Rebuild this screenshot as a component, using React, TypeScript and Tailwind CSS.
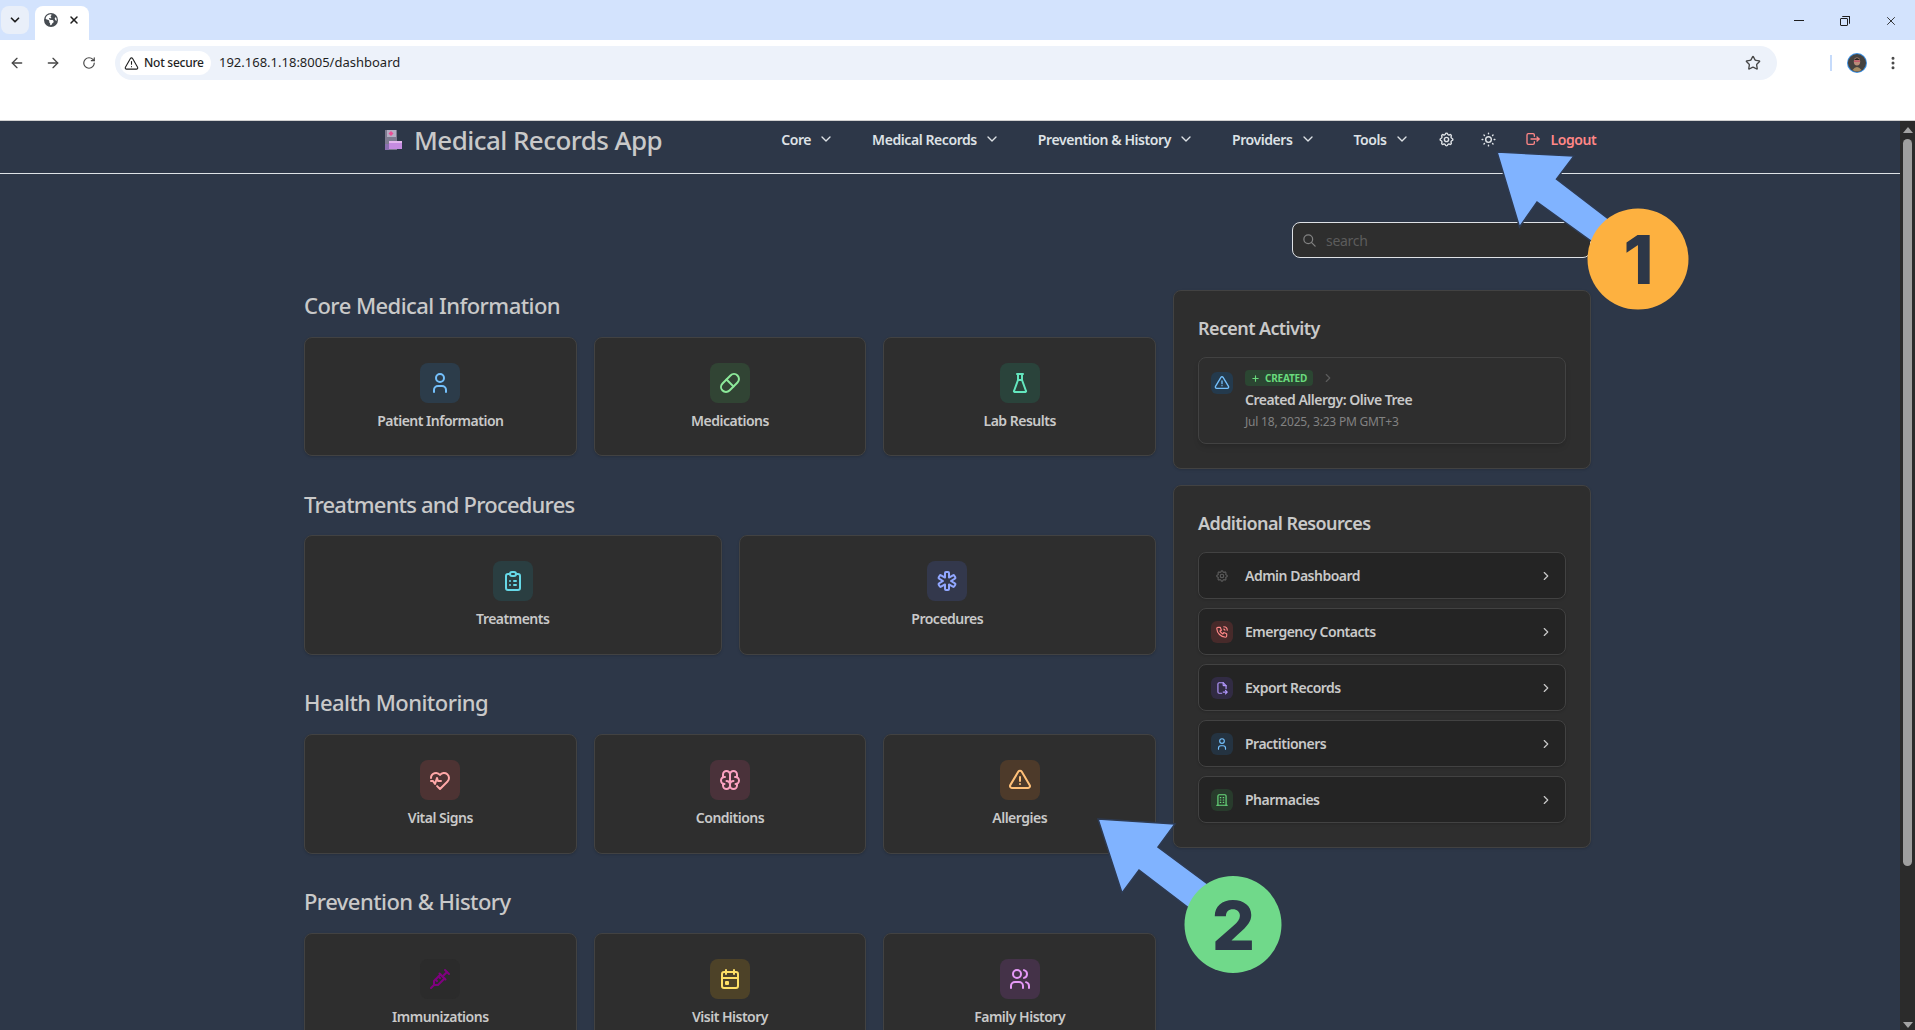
import type { ReactNode } from 'react';
import {
  TbAlertTriangle,
  TbBrain,
  TbBuilding,
  TbCalendarEvent,
  TbChevronDown,
  TbChevronRight,
  TbClipboardList,
  TbFileExport,
  TbFlask,
  TbHeartbeat,
  TbLogout,
  TbMedicalCross,
  TbPhoneCall,
  TbPill,
  TbPlus,
  TbSearch,
  TbSettings,
  TbSun,
  TbUser,
  TbUsers,
  TbVaccine,
} from 'react-icons/tb';
import { FaEarthAmericas } from 'react-icons/fa6';
import { LuArrowLeft, LuArrowRight, LuChevronDown, LuEllipsisVertical, LuRotateCw, LuStar, LuTriangleAlert, LuX } from 'react-icons/lu';

const NavItem = ({ label }: { label: string }) => (
  <div className="flex items-center gap-[7px] text-[14px] font-semibold tracking-[-0.42px] text-[#dee2e6]">
    <span>{label}</span>
    <TbChevronDown size={16} />
  </div>
);

const Tile = ({ icon, label, box }: { icon: ReactNode; label: string; box: string }) => (
  <div className="flex h-[119.67px] flex-col items-center rounded-lg border border-[#424242] bg-[#2e2e2e] pt-[25px] shadow-sm">
    <div className={`flex h-10 w-10 items-center justify-center rounded-lg ${box}`}>{icon}</div>
    <p className="mt-[8px] text-[14px] leading-[20px] font-semibold tracking-[-0.5px] text-[#c9c9c9]">{label}</p>
  </div>
);

const Heading = ({ children }: { children: ReactNode }) => (
  <h2 className="mb-[16.67px] h-[30px] text-[22px] leading-[30px] font-medium tracking-[-0.55px] text-[#c9c9c9]">{children}</h2>
);

const Resource = ({ icon, label, box }: { icon: ReactNode; label: string; box: string }) => (
  <div className="flex h-[47px] items-center rounded-lg border border-[#424242] bg-[#242424] pr-[12px] pl-[12px] shadow-sm">
    <div className={`flex h-[22px] w-[22px] items-center justify-center rounded-md ${box}`}>{icon}</div>
    <span className="ml-[12px] flex-1 text-[14px] font-semibold tracking-[-0.5px] text-[#c9c9c9]">{label}</span>
    <TbChevronRight size={14} className="text-[#c9c9c9]" />
  </div>
);

// browser window around the page
const BrowserChrome = () => (
  <div className="h-[121px] shrink-0 border-b border-[#d0d0d0] bg-white">
    <div className="flex h-10 items-start bg-[#d3e3fd] pt-[6px] pl-[1px]">
      <div className="flex h-7 w-7 items-center justify-center rounded-lg bg-[#e9eff9]">
        <LuChevronDown size={14} strokeWidth={3} className="text-[#1f1f1f]" />
      </div>
      <div className="ml-[6px] flex h-[34px] w-[54px] items-center rounded-t-lg bg-white pb-[6px] pl-[9px]">
        <FaEarthAmericas size={14} className="text-[#474c52]" />
        <LuX size={12} strokeWidth={3} className="ml-[10px] text-[#1f1f1f]" />
      </div>
      <div className="ml-auto flex h-[29px] items-center pr-[17px] text-[#1f1f1f]">
        <div className="h-[1px] w-[10px] bg-[#1f1f1f]" />
        <div className="relative ml-[36px] h-[10px] w-[10px]">
          <div className="absolute top-[2px] left-0 h-[8px] w-[8px] rounded-[1px] border border-[#1f1f1f]" />
          <div className="absolute top-0 left-[2px] h-[8px] w-[8px] rounded-[1px] border-t border-r border-[#1f1f1f]" />
        </div>
        <LuX size={14} strokeWidth={1.5} className="ml-[34px]" />
      </div>
    </div>
    <div className="flex h-[46px] items-center pl-[9px]">
      <LuArrowLeft size={16} strokeWidth={2} className="text-[#474747]" />
      <LuArrowRight size={16} strokeWidth={2} className="ml-[20px] text-[#474747]" />
      <LuRotateCw size={14} strokeWidth={2} className="ml-[21px] text-[#474747]" />
      <div className="ml-[19px] flex h-[34px] w-[1662px] items-center rounded-full bg-[#edf2fa] pr-[16px] pl-[5px]">
        <div className="flex h-6 w-[91px] items-center rounded-full bg-white pl-[4px]">
          <LuTriangleAlert size={15} strokeWidth={1.75} className="text-[#1f1f1f]" />
          <span className="ml-[5px] text-[12px] font-medium tracking-[-0.25px] text-[#1f1f1f]">Not secure</span>
        </div>
        <span className="ml-[8px] flex-1 text-[13px] text-[#1f1f1f]">192.168.1.18:8005/dashboard</span>
        <LuStar size={16} strokeWidth={2} className="text-[#474747]" />
      </div>
      <div className="ml-[53px] h-4 w-[2px] bg-[#c6dbfb]" />
      <svg width="20" height="20" viewBox="0 0 20 20" className="ml-[15px]">
        <circle cx="10" cy="10" r="10" fill="#3b8ee0" />
        <circle cx="10" cy="10" r="9" fill="#45423f" />
        <ellipse cx="10" cy="8.5" rx="3.2" ry="4" fill="#b98d78" />
        <path d="M6.5 7.5 q3.5 -5 7 0 l-1 -0.5 h-5z" fill="#2b2421" />
        <rect x="7" y="7.5" width="6" height="1.3" fill="#c4506a" />
        <path d="M5.5 17 q4.5 -6 9 0 q-4.5 3 -9 0z" fill="#a78c62" />
      </svg>
      <LuEllipsisVertical size={16} strokeWidth={2.5} className="ml-[18px] text-[#474747]" />
    </div>
  </div>
);

const Logo = () => (
  <svg width="18" height="20" viewBox="0 0 18 20">
    <rect x="1" y="0" width="12" height="20" fill="#7d7a90" />
    <rect x="3" y="0" width="9" height="7" fill="#b5adc4" />
    <path d="M7 1 l2.5 2.5 l-2.5 2.5 l-2.5 -2.5z" fill="#ec4f96" />
    <rect x="5" y="11" width="13" height="8" fill="#c58be0" />
    <rect x="5" y="11" width="13" height="2" fill="#e3b6ee" />
    <rect x="1" y="14" width="4" height="6" fill="#8a6fb0" />
  </svg>
);

const App = () => {
  return (
    <div className="relative flex h-screen flex-col overflow-hidden bg-[#2d3748] font-['Noto_Sans',sans-serif]">
      <BrowserChrome />
      <div className="flex min-h-0 flex-1">
        <main className="min-w-0 flex-1">
          {/* Top nav */}
          <header className="flex h-[53px] items-center border-b border-[#dee2e6] pb-[15px] pl-[384px]">
            <Logo />
            <h1 className="ml-[12px] text-[26px] leading-[36px] font-medium tracking-[-0.55px] text-[#c9c9c9]">Medical Records App</h1>
            <nav className="ml-[119px] flex items-center gap-[38px] pb-[1px]">
              <NavItem label="Core" />
              <NavItem label="Medical Records" />
              <NavItem label="Prevention & History" />
              <NavItem label="Providers" />
              <NavItem label="Tools" />
              <div className="ml-[-10px] flex items-center gap-[25px] text-[#dee2e6]">
                <TbSettings size={17} />
                <TbSun size={17} />
              </div>
              <div className="ml-[-10px] flex items-center gap-[10px] text-[14px] font-semibold tracking-[-0.42px] text-[#ff8787]">
                <TbLogout size={16} />
                <span>Logout</span>
              </div>
            </nav>
          </header>

          <div className="w-[1591px] pt-[48px] pl-[304px]">
            {/* Search */}
            <div className="flex justify-end">
              <div className="flex h-9 w-[299px] items-center rounded-lg border border-[#dee2e6] bg-[#2e2e2e] pl-[9px]">
                <TbSearch size={15} className="text-[#828282]" />
                <span className="ml-[9px] text-[14px] tracking-[-0.3px] text-[#5c5c5c]">search</span>
              </div>
            </div>

            <div className="mt-[32px] grid grid-cols-[852px_418px] gap-[17px]">
              {/* Left sections */}
              <div>
                <section className="mb-[32.33px]">
                  <Heading>Core Medical Information</Heading>
                  <div className="grid grid-cols-3 gap-[17px]">
                    <Tile label="Patient Information" box="bg-[#2c3c4a]" icon={<TbUser size={24} className="text-[#74c0fc]" />} />
                    <Tile label="Medications" box="bg-[#314434]" icon={<TbPill size={24} className="text-[#8ce99a]" />} />
                    <Tile label="Lab Results" box="bg-[#2a433b]" icon={<TbFlask size={24} className="text-[#63e6be]" />} />
                  </div>
                </section>
                <section className="mb-[32.33px]">
                  <Heading><span className="tracking-[-0.8px]">Treatments and Procedures</span></Heading>
                  <div className="grid grid-cols-2 gap-[17px]">
                    <Tile label="Treatments" box="bg-[#2a3e41]" icon={<TbClipboardList size={24} className="text-[#66d9e8]" />} />
                    <Tile label="Procedures" box="bg-[#33384c]" icon={<TbMedicalCross size={24} className="text-[#91a7ff]" />} />
                  </div>
                </section>
                <section className="mb-[32.33px]">
                  <Heading>Health Monitoring</Heading>
                  <div className="grid grid-cols-3 gap-[17px]">
                    <Tile label="Vital Signs" box="bg-[#4d3333]" icon={<TbHeartbeat size={24} className="text-[#ffa8a8]" />} />
                    <Tile label="Conditions" box="bg-[#4a323a]" icon={<TbBrain size={24} className="text-[#faa2c1]" />} />
                    <Tile label="Allergies" box="bg-[#4d3a2a]" icon={<TbAlertTriangle size={24} className="text-[#ffc078]" />} />
                  </div>
                </section>
                <section>
                  <Heading>Prevention &amp; History</Heading>
                  <div className="grid grid-cols-3 gap-[17px]">
                    <Tile label="Immunizations" box="bg-[#2b2b2b]" icon={<TbVaccine size={24} className="text-[#800080]" />} />
                    <Tile label="Visit History" box="bg-[#4d4228]" icon={<TbCalendarEvent size={24} className="text-[#ffe066]" />} />
                    <Tile label="Family History" box="bg-[#443248]" icon={<TbUsers size={24} className="text-[#e599f7]" />} />
                  </div>
                </section>
              </div>

              {/* Right column */}
              <aside className="flex flex-col gap-[16px]">
                <div className="rounded-lg border border-[#424242] bg-[#2e2e2e] p-[24px] shadow-sm">
                  <h3 className="mb-[16px] text-[18px] leading-[26px] font-semibold tracking-[-0.6px] text-[#c9c9c9]">Recent Activity</h3>
                  <div className="flex h-[87px] rounded-lg border border-[#424242] bg-[#2e2e2e] pt-[12px] pl-[12px] shadow-md">
                    <div className="mt-[2px] flex h-[22px] w-[22px] items-center justify-center rounded-md bg-[#243a4d]">
                      <TbAlertTriangle size={16} className="text-[#74c0fc]" />
                    </div>
                    <div className="ml-[12px]">
                      <div className="flex items-center">
                        <span className="flex h-4 w-[68px] items-center justify-center gap-[5px] rounded-[4px] bg-[#2b4632] text-[10px] font-bold tracking-[-0.2px] text-[#69db7c]">
                          <TbPlus size={9} strokeWidth={3} />
                          CREATED
                        </span>
                        <TbChevronRight size={14} className="ml-[8px] text-[#5c5c5c]" />
                      </div>
                      <p className="mt-[4px] text-[14px] leading-[20px] font-semibold tracking-[-0.5px] text-[#c9c9c9]">Created Allergy: Olive Tree</p>
                      <p className="mt-[4px] text-[12px] leading-[16px] tracking-[-0.2px] text-[#828282]">Jul 18, 2025, 3:23 PM GMT+3</p>
                    </div>
                  </div>
                </div>

                <div className="rounded-lg border border-[#424242] bg-[#2e2e2e] p-[24px] shadow-sm">
                  <h3 className="mb-[16px] text-[18px] leading-[26px] font-semibold tracking-[-0.6px] text-[#c9c9c9]">Additional Resources</h3>
                  <div className="flex flex-col gap-[9px]">
                    <Resource label="Admin Dashboard" box="" icon={<TbSettings size={14} className="text-[#5c5c5c]" />} />
                    <Resource label="Emergency Contacts" box="bg-[#472a2a]" icon={<TbPhoneCall size={14} className="text-[#ff8787]" />} />
                    <Resource label="Export Records" box="bg-[#312b43]" icon={<TbFileExport size={14} className="text-[#b197fc]" />} />
                    <Resource label="Practitioners" box="bg-[#243341]" icon={<TbUser size={14} className="text-[#74c0fc]" />} />
                    <Resource label="Pharmacies" box="bg-[#283b2c]" icon={<TbBuilding size={14} className="text-[#69db7c]" />} />
                  </div>
                </div>
              </aside>
            </div>
          </div>
        </main>

        {/* Scrollbar */}
        <div className="flex w-[15px] shrink-0 flex-col items-center bg-[#2b2b2b] pt-[6px]">
          <div className="h-0 w-0 border-x-[5px] border-b-[6px] border-x-transparent border-b-[#a3a3a3]" />
          <div className="mt-[6px] h-[727px] w-[9px] rounded-full bg-[#9f9f9f]" />
          <div className="mt-auto mb-[2px] h-0 w-0 border-x-[5px] border-t-[6px] border-x-transparent border-t-[#a3a3a3]" />
        </div>
      </div>

      {/* Annotation arrows */}
      <svg width="1915" height="1030" viewBox="0 0 1915 1030" className="pointer-events-none absolute top-0 left-0">
        <path d="M1497 152 L1574 156 L1556.5 179 L1630 235.5 L1620 262 L1537 202 L1519.5 227 Z" fill="#80b3ff" stroke="#2d3a52" strokeWidth="1.5" />
        <circle cx="1638" cy="259" r="50.5" fill="#fdb140" />
        <path d="M1098 819 L1175 824 L1158 847 L1240 908 L1215 928 L1139 870 L1122 893 Z" fill="#80b3ff" stroke="#2d3a52" strokeWidth="1.5" />
        <circle cx="1233" cy="924.5" r="48.5" fill="#70d98a" />
      </svg>
      <div className="absolute top-[208px] left-[1588px] flex h-[101px] w-[101px] items-center justify-center font-['Inter',sans-serif] text-[68px] leading-none font-extrabold text-[#2d3748]">1</div>
      <div className="absolute top-[876px] left-[1185px] flex h-[97px] w-[97px] items-center justify-center font-['Inter',sans-serif] text-[68px] leading-none font-extrabold text-[#2d3748]">2</div>
    </div>
  );
};

export default App;
